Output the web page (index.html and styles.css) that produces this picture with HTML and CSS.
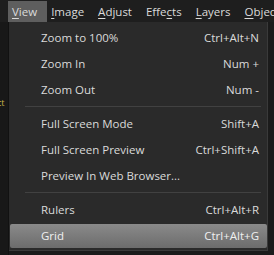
FILE: index.html
```html
<!DOCTYPE html>
<html lang="en">
<head>
  <meta charset="UTF-8">
  <title>View menu</title>
  <link rel="stylesheet" href="styles.css">
</head>
<body>

<div class="menubar">
  <span class="menubar-item open"><u>V</u>iew</span>
  <span class="menubar-item"><u>I</u>mage</span>
  <span class="menubar-item"><u>A</u>djust</span>
  <span class="menubar-item">Effe<u>c</u>ts</span>
  <span class="menubar-item"><u>L</u>ayers</span>
  <span class="menubar-item"><u>O</u>bjec</span>
</div>

<div class="workspace">
  <div class="side-strip">
    <span class="stray">ct</span>
  </div>

  <div class="dropdown">
    <div class="menu-row"><span>Zoom to 100%</span><span class="key">Ctrl+Alt+N</span></div>
    <div class="menu-row"><span>Zoom In</span><span class="key">Num +</span></div>
    <div class="menu-row"><span>Zoom Out</span><span class="key">Num -</span></div>
    <div class="separator"></div>
    <div class="menu-row"><span>Full Screen Mode</span><span class="key">Shift+A</span></div>
    <div class="menu-row"><span>Full Screen Preview</span><span class="key">Ctrl+Shift+A</span></div>
    <div class="menu-row"><span>Preview In Web Browser...</span><span class="key"></span></div>
    <div class="separator"></div>
    <div class="menu-row"><span>Rulers</span><span class="key">Ctrl+Alt+R</span></div>
    <div class="menu-row hover"><span>Grid</span><span class="key">Ctrl+Alt+G</span></div>
  </div>
</div>

</body>
</html>
```

FILE: styles.css
```css
body {
  margin: 0;
  width: 274px;
  height: 255px;
  overflow: hidden;
  background: #1b1b1b;
  font-family: 'Open Sans', sans-serif;
  font-size: 11.5px;
  color: #dadada;
}

.menubar {
  display: flex;
  height: 22px;
  padding: 1px 0 0 8px;
  box-sizing: border-box;
  background: #1e1e1e;
  overflow: hidden;
}

.menubar-item {
  padding: 0 10px 0 4px;
  line-height: 21px;
  white-space: nowrap;
}

.menubar-item.open {
  background: #5e5e5e;
  padding: 0 10px 0 4px;
}

.menubar-item u {
  text-decoration-thickness: 1px;
  text-underline-offset: 2px;
}

.workspace {
  display: flex;
  height: 233px;
}

.side-strip {
  width: 8px;
  background: #181818;
  border-right: 1px solid #111;
  padding-top: 74px;
  overflow: hidden;
}

.stray {
  display: block;
  width: 8px;
  overflow: hidden;
  font-size: 9px;
  color: #c8b24a;
  text-indent: -3px;
}

.dropdown {
  width: 259px;
  height: 229px;
  background: #2a2a2a;
  border-right: 1px solid #3a3a3a;
  border-bottom: 1px solid #3a3a3a;
  padding: 3px 0 0 1px;
  box-sizing: border-box;
}

.menu-row {
  display: flex;
  justify-content: space-between;
  height: 26px;
  line-height: 26px;
  padding: 0 8px 0 31px;
}

.key {
  text-align: right;
}

.separator {
  height: 1px;
  background: #414141;
  margin: 3px 6px 4px 15px;
}

.menu-row.hover {
  height: 24px;
  line-height: 24px;
  margin-top: 1px;
  border-radius: 2px;
  background: linear-gradient(#8a8a8a, #6c6c6c);
  color: #f0f0f0;
}
```
